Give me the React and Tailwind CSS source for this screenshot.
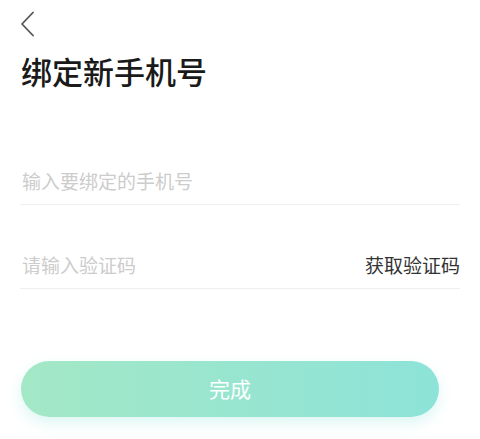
export default function App() {
  return (
    <div
      className="w-[480px] h-[439px] bg-white overflow-hidden flex flex-col"
      style={{ fontFamily: '"Noto Sans CJK SC", "Noto Sans", sans-serif' }}
    >
      {/* back */}
      <div className="h-[48px] pl-[20px] pt-[11px]">
        <svg width="16" height="26" viewBox="0 0 16 26" fill="none">
          <path d="M13 1.5 L2 13 L13 24.5" stroke="#555" strokeWidth="1.8" strokeLinecap="round" strokeLinejoin="round" />
        </svg>
      </div>

      {/* title */}
      <h1 className="pl-[21px] mt-[1px] text-[31px] leading-[44px] font-medium text-[#1a1a1a]">绑定新手机号</h1>

      {/* phone */}
      <div className="mx-[20px] mt-[66px] h-[46px] flex items-center border-b border-[#eeeeee]">
        <span className="pl-[2px] text-[19px] text-[#cccccc]">输入要绑定的手机号</span>
      </div>

      {/* code */}
      <div className="mx-[20px] mt-[38px] h-[46px] flex items-center justify-between border-b border-[#eeeeee]">
        <span className="pl-[2px] text-[19px] text-[#cccccc]">请输入验证码</span>
        <span className="text-[19px] text-[#333333]">获取验证码</span>
      </div>

      {/* submit */}
      <button className="mx-[21px] mt-[72px] w-[418px] h-[56px] rounded-full bg-gradient-to-r from-[#a3e8c6] to-[#8de3d8] shadow-[0_6px_14px_rgba(140,227,216,0.3)] text-white text-[21px]">
        完成
      </button>
    </div>
  );
}
